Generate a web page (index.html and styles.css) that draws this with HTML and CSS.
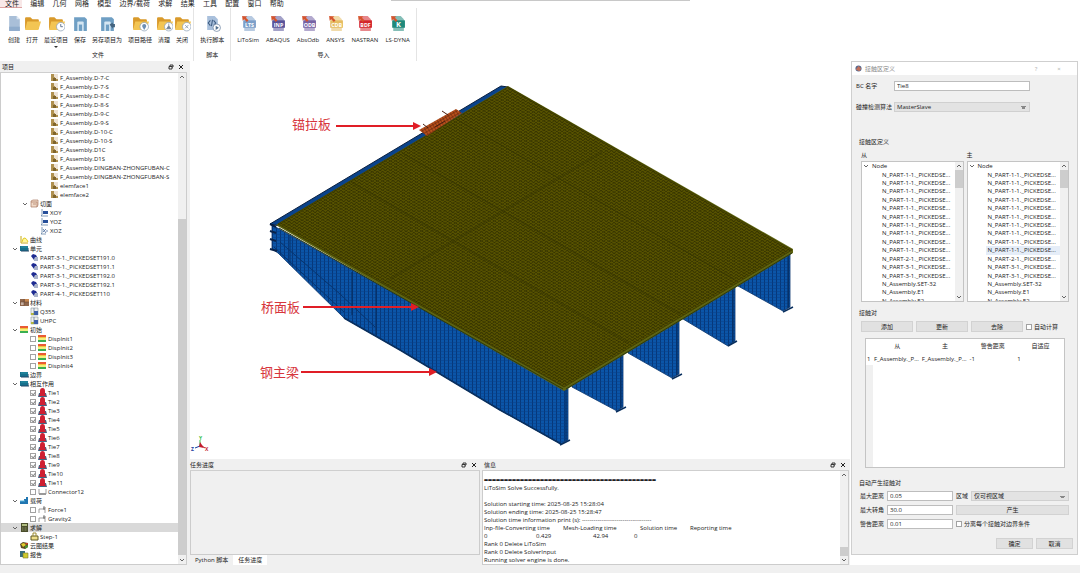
FILE: index.html
```html
<!DOCTYPE html>
<html lang="zh-CN">
<head>
<meta charset="utf-8">
<title>LiToSim</title>
<link rel="stylesheet" href="styles.css">
</head>
<body>
<svg class="defs" aria-hidden="true">
  <symbol id="doc" viewBox="0 0 16 16"><path d="M3 1h7l3 3v11H3z" fill="#a9bfd8"/><path d="M10 1v3h3" fill="#dce7f3"/><path d="M3 11h10v4H3z" fill="#8faccc"/></symbol>
  <symbol id="folder" viewBox="0 0 16 16"><path d="M1 3q0-1 1-1h4l2 2h5q1 0 1 1v8H1z" fill="#d99a2b"/><path d="M3 6h13l-2.500 8H1z" fill="#f3c553"/></symbol>
  <symbol id="recent" viewBox="0 0 16 16"><use href="#folder"/><circle cx="12" cy="11" r="4" fill="#fff" stroke="#8da0b8" stroke-width=".7"/><path d="M12 8.500V11h2" fill="none" stroke="#5f7390" stroke-width=".9"/></symbol>
  <symbol id="save" viewBox="0 0 16 16"><path d="M2 2h10l2 2v11H2z" fill="#6f9fc4"/><path d="M5 15V7q0-1 1-1h4q1 0 1 1v8z" fill="#d5e6f2"/><path d="M6.500 15V9h3v6z" fill="#6f9fc4"/></symbol>
  <symbol id="saveas" viewBox="0 0 16 16"><use href="#save"/><path d="M10 9l3-2v1.500h2v3h-2V13z" fill="#44647f"/></symbol>
  <symbol id="path" viewBox="0 0 16 16"><use href="#folder"/><circle cx="11.500" cy="11" r="4" fill="#fff" stroke="#8da0b8" stroke-width=".7"/><path d="M11.500 14l-1.800-3a1.900 1.900 0 1 1 3.600 0z" fill="#6d8fb5"/></symbol>
  <symbol id="clean" viewBox="0 0 16 16"><use href="#folder"/><circle cx="12" cy="11" r="4" fill="#fff" stroke="#8da0b8" stroke-width=".7"/><path d="M12 8v2l2 3h-4l2-3" fill="#6d7f95" stroke="#6d7f95" stroke-width=".7"/></symbol>
  <symbol id="closef" viewBox="0 0 16 16"><use href="#folder"/><circle cx="12" cy="11" r="4" fill="#fff" stroke="#8da0b8" stroke-width=".7"/><path d="M10.500 9.500l3 3m0-3l-3 3" stroke="#8797aa" stroke-width=".8"/></symbol>
  <symbol id="run" viewBox="0 0 16 16"><path d="M3 1h7l3 3v10H3z" fill="#a9c0dc"/><path d="M6 5L4 7.500 6 10m3-5l2 2.500L9 10M8 4.500l-1 6" fill="none" stroke="#3c5c82"/><circle cx="12" cy="12" r="3.500" fill="#fff" stroke="#6f86a3" stroke-width=".7"/><path d="M11 10l3 2-3 2z" fill="#52708f"/></symbol>
  <symbol id="badge" viewBox="0 0 16 16"><path d="M4 1h7l3 3v11H4z" fill="currentColor" opacity=".55"/><path d="M3 5h12v7H3z" fill="currentColor"/><path d="M2 1l5 .5-1.500 1L8 5 6.500 6.500 4 4 2.500 5.500z" fill="#d5532c"/></symbol>
  <symbol id="face" viewBox="0 0 9 9"><path d="M1 1h4v3h3v4H1z" fill="#b0914f"/><path d="M4 1h4v5H5V4H4z" fill="#ede2d4"/><path d="M3 5h3v3H3z" fill="#80652c"/></symbol>
  <symbol id="cut" viewBox="0 0 9 9"><path d="M1 2l2-1h5v5L7 8H1z" fill="#f0d9c7" stroke="#a97862" stroke-width=".7"/><path d="M1 3h6v5M3 5h3" fill="none" stroke="#a97862" stroke-width=".7"/></symbol>
  <symbol id="plane" viewBox="0 0 9 9"><path d="M2 1v6L1 8h7" fill="none" stroke="#6383a6" stroke-width=".8"/><path d="M3 3h5v3H3z" fill="#27509a"/></symbol>
  <symbol id="plane2" viewBox="0 0 9 9"><path d="M2 1v6L1 8h5" fill="none" stroke="#6383a6" stroke-width=".8"/><path d="M3 3l3 4M6 3L3 6M6 5h2" stroke="#4a6b9c" stroke-width=".8"/></symbol>
  <symbol id="curve" viewBox="0 0 9 9"><path d="M1 1v7h7" fill="none" stroke="#c8aa10"/><path d="M2 7q1-5 3-4t3 4" fill="#fff79a" stroke="#dfca28"/></symbol>
  <symbol id="block" viewBox="0 0 9 9"><path d="M0 2h8v5H0z" fill="#16718d"/><path d="M1 7h8V4" fill="none" stroke="#234767"/><path d="M1 3h7" stroke="#2b95a8"/></symbol>
  <symbol id="elem" viewBox="0 0 9 9"><path d="M1 3l2-2 3 1 1 2-3 3z" fill="#1e2b91"/><path d="M5 4h3v4H4V6z" fill="#aab3c9"/></symbol>
  <symbol id="mat" viewBox="0 0 9 9"><path d="M0 1h9v7H0z" fill="#8f664b"/><path d="M5 1h4v3H5z" fill="#c88850"/><path d="M1 4h3v3H1z" fill="#c6aea0"/><path d="M4 1v7M0 4h9" stroke="#6b4938" stroke-width=".6"/></symbol>
  <symbol id="mat2" viewBox="0 0 9 9"><path d="M1 1h7v7H1z" fill="#eef0ed" stroke="#8694a0" stroke-width=".6"/><path d="M4 4h4v4H4z" fill="#3d5fa9"/><path d="M1 6h3v2H1z" fill="#b5b83c"/><path d="M4 1v7" stroke="#586e95" stroke-width=".7"/></symbol>
  <symbol id="init" viewBox="0 0 9 9"><path d="M0 1h8v2H0z" fill="#e95b35"/><path d="M0 3h8v1H0z" fill="#f4c43c"/><path d="M0 4h8v2H0z" fill="#f1ef7f"/><path d="M0 6h8v2H0z" fill="#39af51"/></symbol>
  <symbol id="tie" viewBox="0 0 9 9"><path d="M0 9l1-4h7l1 4z" fill="#416684"/><path d="M2 6V3q0-3 2.500-3T7 3v3l1 2H1z" fill="#cf1f31"/></symbol>
  <symbol id="conn" viewBox="0 0 9 9"><path d="M1 2v5h7V2" fill="none" stroke="#888" stroke-width=".8"/><path d="M1 6h7v2H1z" fill="#999"/></symbol>
  <symbol id="load" viewBox="0 0 9 9"><path d="M0 5h4V3h2V1h2v7H0z" fill="#2176b1"/><path d="M0 5h5" stroke="#52b0d9"/></symbol>
  <symbol id="force" viewBox="0 0 9 9"><path d="M1 8V4h6v4" fill="none" stroke="#777" stroke-width=".7"/><path d="M6 1v4M5 3h3" stroke="#555" stroke-width=".7"/></symbol>
  <symbol id="solve" viewBox="0 0 9 9"><path d="M1 0h7v9H1z" fill="#4a4d2b"/><path d="M2 1h5v2H2z" fill="#b0bd80"/><path d="M2 5h5M2 7h5" stroke="#8b9268" stroke-dasharray="1 .5"/></symbol>
  <symbol id="step" viewBox="0 0 9 9"><path d="M1 4h7v4H1z" fill="#efdf8c" stroke="#615a24"/><path d="M3 4V1h3v3" fill="none" stroke="#9c8b31"/></symbol>
  <symbol id="cloud" viewBox="0 0 9 9"><path d="M0 3l3-2 5 1v4L5 8 1 7z" fill="#5b4a25"/><path d="M1 3l3-1 2 2-3 2z" fill="#e3cf2c"/><path d="M5 5l3-1v2L5 8z" fill="#4b9335"/><path d="M5 2l3 0-1 2z" fill="#d14223"/></symbol>
  <symbol id="report" viewBox="0 0 9 9"><path d="M0 1h5v6H0z" fill="#386e7d"/><path d="M3 3h5v5H3z" fill="#d0ca2e" stroke="#777c33" stroke-width=".6"/></symbol>
  <symbol id="down" viewBox="0 0 6 6"><path d="M1 2l2 2 2-2" fill="none" stroke="#555" stroke-width=".9"/></symbol>
  <symbol id="up" viewBox="0 0 6 6"><path d="M1 4l2-2 2 2" fill="none" stroke="#555" stroke-width=".9"/></symbol>
  <symbol id="restore" viewBox="0 0 6 6"><path d="M2 2V1h3v2H4M1 2.500h3V5H1z" fill="none" stroke="#222" stroke-width=".9"/></symbol>
  <symbol id="x" viewBox="0 0 6 6"><path d="M1 1l4 4m0-4L1 5" stroke="#222" stroke-width="1"/></symbol>
</svg>

<header class="top">
  <nav class="menu">
    <button class="active">文件</button><button>编辑</button><button>几何</button><button>网格</button><button>模型</button><button>边界/载荷</button><button>求解</button><button>结果</button><button>工具</button><button>配置</button><button>窗口</button><button>帮助</button>
  </nav>
  <div class="ribbon">
    <section class="group files">
      <div class="tools">
        <button><svg><use href="#doc"/></svg>创建</button>
        <button><svg><use href="#folder"/></svg>打开</button>
        <button class="drop"><svg><use href="#recent"/></svg>最近项目</button>
        <button><svg><use href="#save"/></svg>保存</button>
        <button><svg><use href="#saveas"/></svg>另存项目为</button>
        <button><svg><use href="#path"/></svg>项目路径</button>
        <button><svg><use href="#clean"/></svg>清理</button>
        <button><svg><use href="#closef"/></svg>关闭</button>
      </div>
      <h2>文件</h2>
    </section>
    <section class="group">
      <div class="tools"><button><svg><use href="#run"/></svg>执行脚本</button></div>
      <h2>脚本</h2>
    </section>
    <section class="group imports">
      <div class="tools">
        <button><svg class="c-lts" viewBox="0 0 16 16"><use href="#badge"/><text x="9" y="11">LTS</text></svg>LiToSim</button>
        <button><svg class="c-inp" viewBox="0 0 16 16"><use href="#badge"/><text x="9" y="11">INP</text></svg>ABAQUS</button>
        <button><svg class="c-odb" viewBox="0 0 16 16"><use href="#badge"/><text x="9" y="11">ODB</text></svg>AbsOdb</button>
        <button><svg class="c-cdb" viewBox="0 0 16 16"><use href="#badge"/><text x="9" y="11">CDB</text></svg>ANSYS</button>
        <button><svg class="c-bdf" viewBox="0 0 16 16"><use href="#badge"/><text x="9" y="11">BDF</text></svg>NASTRAN</button>
        <button><svg class="c-k" viewBox="0 0 16 16"><use href="#badge"/><text class="big" x="9" y="11">K</text></svg>LS-DYNA</button>
      </div>
      <h2>导入</h2>
    </section>
  </div>
</header>

<main class="work">
  <aside class="project">
    <div class="bar"><h2>项目</h2><button aria-label="浮动"><svg><use href="#restore"/></svg></button><button aria-label="关闭"><svg><use href="#x"/></svg></button></div>
    <div class="scroller">
      <ul class="tree">
        <li class="l3"><svg><use href="#face"/></svg>F_Assembly.D-7-C</li>
        <li class="l3"><svg><use href="#face"/></svg>F_Assembly.D-7-S</li>
        <li class="l3"><svg><use href="#face"/></svg>F_Assembly.D-8-C</li>
        <li class="l3"><svg><use href="#face"/></svg>F_Assembly.D-8-S</li>
        <li class="l3"><svg><use href="#face"/></svg>F_Assembly.D-9-C</li>
        <li class="l3"><svg><use href="#face"/></svg>F_Assembly.D-9-S</li>
        <li class="l3"><svg><use href="#face"/></svg>F_Assembly.D-10-C</li>
        <li class="l3"><svg><use href="#face"/></svg>F_Assembly.D-10-S</li>
        <li class="l3"><svg><use href="#face"/></svg>F_Assembly.D1C</li>
        <li class="l3"><svg><use href="#face"/></svg>F_Assembly.D1S</li>
        <li class="l3"><svg><use href="#face"/></svg>F_Assembly.DINGBAN-ZHONGFUBAN-C</li>
        <li class="l3"><svg><use href="#face"/></svg>F_Assembly.DINGBAN-ZHONGFUBAN-S</li>
        <li class="l3"><svg><use href="#face"/></svg>elemface1</li>
        <li class="l3"><svg><use href="#face"/></svg>elemface2</li>
        <li class="l1 open"><svg class="chev"><use href="#down"/></svg><svg><use href="#cut"/></svg>切面</li>
        <li class="l2"><svg><use href="#plane"/></svg>XOY</li>
        <li class="l2"><svg><use href="#plane"/></svg>YOZ</li>
        <li class="l2"><svg><use href="#plane2"/></svg>XOZ</li>
        <li class="l0"><svg><use href="#curve"/></svg>曲线</li>
        <li class="l0 open"><svg class="chev"><use href="#down"/></svg><svg><use href="#block"/></svg>单元</li>
        <li class="l1"><svg><use href="#elem"/></svg>PART-3-1._PICKEDSET191.0</li>
        <li class="l1"><svg><use href="#elem"/></svg>PART-3-1._PICKEDSET191.1</li>
        <li class="l1"><svg><use href="#elem"/></svg>PART-3-1._PICKEDSET192.0</li>
        <li class="l1"><svg><use href="#elem"/></svg>PART-3-1._PICKEDSET192.1</li>
        <li class="l1"><svg><use href="#elem"/></svg>PART-4-1._PICKEDSET110</li>
        <li class="l0 open"><svg class="chev"><use href="#down"/></svg><svg><use href="#mat"/></svg>材料</li>
        <li class="l1"><svg><use href="#mat2"/></svg>Q355</li>
        <li class="l1"><svg><use href="#mat2"/></svg>UHPC</li>
        <li class="l0 open"><svg class="chev"><use href="#down"/></svg><svg><use href="#init"/></svg>初始</li>
        <li class="l1"><label><input type="checkbox"><svg><use href="#init"/></svg>DispInit1</label></li>
        <li class="l1"><label><input type="checkbox"><svg><use href="#init"/></svg>DispInit2</label></li>
        <li class="l1"><label><input type="checkbox"><svg><use href="#init"/></svg>DispInit3</label></li>
        <li class="l1"><label><input type="checkbox"><svg><use href="#init"/></svg>DispInit4</label></li>
        <li class="l0"><svg><use href="#block"/></svg>边界</li>
        <li class="l0 open"><svg class="chev"><use href="#down"/></svg><svg><use href="#block"/></svg>相互作用</li>
        <li class="l1"><label><input type="checkbox" checked><svg><use href="#tie"/></svg>Tie1</label></li>
        <li class="l1"><label><input type="checkbox" checked><svg><use href="#tie"/></svg>Tie2</label></li>
        <li class="l1"><label><input type="checkbox" checked><svg><use href="#tie"/></svg>Tie3</label></li>
        <li class="l1"><label><input type="checkbox" checked><svg><use href="#tie"/></svg>Tie4</label></li>
        <li class="l1"><label><input type="checkbox" checked><svg><use href="#tie"/></svg>Tie5</label></li>
        <li class="l1"><label><input type="checkbox" checked><svg><use href="#tie"/></svg>Tie6</label></li>
        <li class="l1"><label><input type="checkbox" checked><svg><use href="#tie"/></svg>Tie7</label></li>
        <li class="l1"><label><input type="checkbox" checked><svg><use href="#tie"/></svg>Tie8</label></li>
        <li class="l1"><label><input type="checkbox" checked><svg><use href="#tie"/></svg>Tie9</label></li>
        <li class="l1"><label><input type="checkbox" checked><svg><use href="#tie"/></svg>Tie10</label></li>
        <li class="l1"><label><input type="checkbox" checked><svg><use href="#tie"/></svg>Tie11</label></li>
        <li class="l1"><label><input type="checkbox"><svg><use href="#conn"/></svg>Connector12</label></li>
        <li class="l0 open"><svg class="chev"><use href="#down"/></svg><svg><use href="#load"/></svg>载荷</li>
        <li class="l1"><label><input type="checkbox"><svg><use href="#force"/></svg>Force1</label></li>
        <li class="l1"><label><input type="checkbox"><svg><use href="#force"/></svg>Gravity2</label></li>
        <li class="l0 open selected"><svg class="chev"><use href="#down"/></svg><svg><use href="#solve"/></svg>求解</li>
        <li class="l1"><svg><use href="#step"/></svg>Step-1</li>
        <li class="l0"><svg><use href="#cloud"/></svg>云图结果</li>
        <li class="l0"><svg><use href="#report"/></svg>报告</li>
      </ul>
      <div class="sb sb-tree"><svg><use href="#up"/></svg><i></i><svg><use href="#down"/></svg></div>
    </div>
  </aside>

  <section class="center">
    <div class="view">
      <svg viewBox="190 61 660 398" role="img" aria-label="桥梁有限元模型">
        <defs>
          <pattern id="mesh" width="1" height="1" patternUnits="userSpaceOnUse" patternTransform="matrix(2.600 1.500 2.600 -1.560 278 225)"><rect width="1" height="1" fill="#575200"/><path d="M0 0H1M0 0V1" stroke="#2e2d00" stroke-width=".34"/></pattern>
          <pattern id="ribs" width="4" height="3" patternUnits="userSpaceOnUse"><rect width="4" height="3" fill="#0b55a8"/><path d="M.5 0v3" stroke="#06387a"/><path d="M0 .5h4" stroke="#083f86" stroke-width=".5"/></pattern>
          <pattern id="omesh" width="3" height="3" patternUnits="userSpaceOnUse" patternTransform="rotate(-30)"><rect width="3" height="3" fill="#b9501c"/><path d="M0 0h3M0 0v3" stroke="#5c2209"/></pattern>
        </defs>
        <g fill="url(#ribs)" stroke="#07336c" stroke-width=".8">
          <path d="M738 286L790 253V307L783 311 738 286z"/>
          <path d="M683 318L735 287V341L728 346 683 319z"/>
          <path d="M628 352L679 320V374L672 378 628 353z"/>
          <path d="M572 386L623 353V407L617 411 572 387z"/>
          <path d="M272 225L562 387 568 386V440L561 444 500 410 400 350 344 318 278 253 272 249z"/>
        </g>
        <path d="M783 312l10-5M728 346l9-5M672 379l10-5M616 412l10-5M560 445l10-5M561 444L500 410 400 350 344 318" fill="none" stroke="#092f5e" stroke-width="1.500"/>
        <path d="M788 254v54M733 289v53M677 322v53M621 355v53M566 388v53M376 285v50M352 272v43" stroke="#062b5b"/>
        <path d="M280 242l60 52 35 33M274 247l70 65M290 235v30" fill="none" stroke="#07356f"/>
        <path d="M270 224l6 3M270 231l6 2M270 239l6 2M270 249l7 2" stroke="#08224a" stroke-width="2"/>
        <path d="M270 224L501 86l7 1L280 226z" fill="#0a438b" stroke="#0a1f3e"/>
        <path d="M276 225L508 86 793 249v4L564 391z" fill="#5f6411"/>
        <path d="M278 224L508 87 792 250 564 387z" fill="url(#mesh)" stroke="#414000"/>
        <path d="M402 153L680 314M351 182L629 343M456 119l278 160M390 279l212-127" stroke="#353500" stroke-width=".8" opacity=".7"/>
        <path d="M279 228L563 389M566 389L792 253" fill="none" stroke="#2b3911"/>
        <path d="M419 130L456 109l6 4-35 23z" fill="url(#omesh)"/>
        <path d="M435 127l10-6M442 111l6 4M423 124l5 4" stroke="#4c1f10"/>
        <g stroke="#e01e26" stroke-width="2"><path d="M336 126h80M303 307h110M301 372h130"/></g>
        <path d="M413 122l8 4-8 4zM411 303l8 4-8 4zM429 368l8 4-8 4z" fill="#e01e26"/>
        <g class="note"><text x="292" y="129">锚拉板</text><text x="261" y="312">桥面板</text><text x="260" y="377">钢主梁</text></g>
        <path d="M200 446v-6" stroke="#3ac04a"/><path d="M200 446l-5 2" stroke="#183a9c"/><path d="M200 442l4 6-5-1z" fill="#c21b2d"/><path d="M202 446l3 2" stroke="#c21b2d"/>
        <g class="axis"><text x="199" y="440" fill="#3ac04a">Y</text><text x="191" y="451" fill="#183a9c">Z</text><text x="205" y="451" fill="#c21b2d">X</text></g>
      </svg>
    </div>
    <div class="docks">
      <section class="dock task">
        <div class="bar"><h2>任务进度</h2><button aria-label="浮动"><svg><use href="#restore"/></svg></button><button aria-label="关闭"><svg><use href="#x"/></svg></button></div>
        <div class="empty"></div>
        <div class="tabs"><button>Python 脚本</button><button class="on">任务进度</button></div>
      </section>
      <section class="dock info">
        <div class="bar"><h2>信息</h2><button aria-label="浮动"><svg><use href="#restore"/></svg></button><button aria-label="关闭"><svg><use href="#x"/></svg></button></div>
        <div class="log">
          <div class="lines">
            <p class="rule">===========================================</p>
            <p>LiToSim Solve Successfully.</p>
            <p>&nbsp;</p>
            <p>Solution starting time: 2025-08-25 15:28:04</p>
            <p>Solution ending time: 2025-08-25 15:28:47</p>
            <p>Solution time information print (s): ------------------------------------</p>
            <p class="cols"><span>Inp-file-Converting time</span><span>Mesh-Loading time</span><span>Solution time</span><span>Reporting time</span></p>
            <p class="vals"><span>0</span><span>0.429</span><span>42.94</span><span>0</span></p>
            <p>Rank 0 Delete LiToSim</p>
            <p>Rank 0 Delete SolverInput</p>
            <p>Running solver engine is done.</p>
          </div>
          <div class="sb sb-log"><svg><use href="#up"/></svg><i></i><svg><use href="#down"/></svg></div>
        </div>
      </section>
    </div>
  </section>

  <aside class="side">
    <form class="dialog">
      <div class="title"><svg viewBox="0 0 8 8"><circle cx="4" cy="4" r="3.500" fill="#596a8e"/><path d="M1 5l3-4 3 3-2 3z" fill="#c2705b"/></svg><h2>接触区定义</h2><button type="button">?</button><button type="button">×</button></div>
      <div class="fields">
        <label for="bc">BC 名字</label><input id="bc" type="text" value="Tie8">
        <label for="alg">碰撞检测算法</label><select id="alg"><option>MasterSlave</option></select>
      </div>
      <h3>接触区定义</h3>
      <div class="lists">
        <div><h4>从</h4>
          <div class="list">
            <ul><li class="node"><svg class="chev"><use href="#down"/></svg>Node</li><li>N_PART-1-1._PICKEDSE...</li><li>N_PART-1-1._PICKEDSE...</li><li>N_PART-1-1._PICKEDSE...</li><li>N_PART-1-1._PICKEDSE...</li><li>N_PART-1-1._PICKEDSE...</li><li>N_PART-1-1._PICKEDSE...</li><li>N_PART-1-1._PICKEDSE...</li><li>N_PART-1-1._PICKEDSE...</li><li>N_PART-1-1._PICKEDSE...</li><li>N_PART-1-1._PICKEDSE...</li><li>N_PART-2-1._PICKEDSE...</li><li>N_PART-3-1._PICKEDSE...</li><li>N_PART-3-1._PICKEDSE...</li><li>N_Assembly.SET-32</li><li>N_Assembly.E1</li><li>N_Assembly.E2</li></ul>
            <div class="sb sb-list"><svg><use href="#up"/></svg><i></i><svg><use href="#down"/></svg></div>
          </div>
        </div>
        <div><h4>主</h4>
          <div class="list">
            <ul><li class="node"><svg class="chev"><use href="#down"/></svg>Node</li><li>N_PART-1-1._PICKEDSE...</li><li>N_PART-1-1._PICKEDSE...</li><li>N_PART-1-1._PICKEDSE...</li><li>N_PART-1-1._PICKEDSE...</li><li>N_PART-1-1._PICKEDSE...</li><li>N_PART-1-1._PICKEDSE...</li><li>N_PART-1-1._PICKEDSE...</li><li>N_PART-1-1._PICKEDSE...</li><li>N_PART-1-1._PICKEDSE...</li><li class="hover">N_PART-1-1._PICKEDSE...</li><li>N_PART-2-1._PICKEDSE...</li><li>N_PART-3-1._PICKEDSE...</li><li>N_PART-3-1._PICKEDSE...</li><li>N_Assembly.SET-32</li><li>N_Assembly.E1</li><li>N_Assembly.E2</li></ul>
            <div class="sb sb-list"><svg><use href="#up"/></svg><i></i><svg><use href="#down"/></svg></div>
          </div>
        </div>
      </div>
      <h3>接触对</h3>
      <div class="actions"><button type="button">添加</button><button type="button">更新</button><button type="button">去除</button><label><input type="checkbox">自动计算</label></div>
      <div class="pairs">
        <table>
          <thead><tr><th></th><th>从</th><th>主</th><th>警告距离</th><th>自适应</th></tr></thead>
          <tbody><tr><td>1</td><td>F_Assembly._P...</td><td>F_Assembly._P...</td><td>-1</td><td>1</td></tr></tbody>
        </table>
        <div class="rest"></div>
      </div>
      <h3>自动产生接触对</h3>
      <div class="auto">
        <label for="dist">最大距离</label><input id="dist" type="text" value="0.05">
        <div class="region"><label for="reg">区域</label><select id="reg"><option>仅可视区域</option></select></div>
        <label for="ang">最大转角</label><input id="ang" type="text" value="30.0">
        <button type="button">产生</button>
        <label for="warn">警告距离</label><input id="warn" type="text" value="0.01">
        <label class="check"><input type="checkbox">分离每个接触对边界条件</label>
      </div>
      <div class="confirm"><button type="button">确定</button><button type="button">取消</button></div>
    </form>
  </aside>
</main>
</body>
</html>
```

FILE: styles.css
```css
* { box-sizing: border-box; }
body {
  margin: 0;
  min-height: 100vh;
  display: flex;
  flex-direction: column;
  background: #f0f0f0;
  color: #222;
  font: 6px/8px "Open Sans", "Noto Sans CJK SC", sans-serif;
}
h2, h3, h4, p, ul { margin: 0; padding: 0; font: inherit; }
ul { list-style: none; }
svg { display: block; flex: none; }
.defs { position: absolute; width: 0; height: 0; }
button, input, select { font: inherit; color: inherit; margin: 0; padding: 0; border: 0; border-radius: 0; background: none; }

input[type="checkbox"] {
  appearance: none;
  flex: none;
  width: 6px;
  height: 6px;
  border: 1px solid #a2a2a2;
  background: #fff;
  display: grid;
  place-items: center;
}
input[type="checkbox"]:checked::after {
  content: "";
  width: 2px;
  height: 3px;
  border: solid #888;
  border-width: 0 1px 1px 0;
  rotate: 40deg;
}

/* menu and ribbon */
.top { background: #fff linear-gradient(#c8c8c8, #c8c8c8) no-repeat 391px 0 / 299px 1px; height: 61px; }
.menu {
  display: flex;
  justify-content: space-between;
  width: 284px;
  height: 8px;
  font-size: 7px;
  line-height: 7px;
}
.menu button { height: 8px; padding: 0 0 1px; }
.menu .active { padding: 0 3px 1px 5px; background: #f8e8e8; border-bottom: 1px solid #dda3a3; }
.ribbon { display: flex; height: 53px; }
.group { display: flex; flex-direction: column; align-items: center; padding: 7px 6px 0; border-right: 1px solid #e4e4e4; }
.files { padding: 7px 5px 0 8px; }
.tools { display: flex; gap: 6px; }
.imports .tools { gap: 7px; }
.tools button { display: flex; flex-direction: column; align-items: center; gap: 4px; height: 36px; white-space: nowrap; }
.tools svg { width: 17px; height: 17px; margin: 0 -3px; }
.tools .drop { position: relative; }
.drop::after { content: ""; position: absolute; bottom: 3px; border: 2px solid transparent; border-top-color: #333; border-bottom: 0; }
.group h2 { line-height: 8px; }
.tools text { font: bold 5px "Open Sans", sans-serif; text-anchor: middle; fill: #fff; }
.tools .big { font-size: 7px; }
.c-lts { color: #7c9fc9; }
.c-inp { color: #58539a; }
.c-odb { color: #7563a5; }
.c-cdb { color: #e6bd62; }
.c-bdf { color: #d3242b; }
.c-k { color: #1f897b; }

/* work area */
.work { display: flex; flex: 1; padding-bottom: 8px; }
.bar { display: flex; align-items: center; height: 12px; padding: 0 3px 0 2px; gap: 4px; background: #f0f0f0; border-bottom: 1px solid #cfcfcf; }
.task .bar { padding-left: 0; }
.bar h2 { flex: 1; }
.bar svg { width: 6px; height: 6px; }
.project { flex: 0 0 187px; display: flex; flex-direction: column; }
.scroller { display: flex; flex: 1; background: #fff; border: solid #ccc; border-width: 0 1px 1px; }
.tree { flex: 1; }
.tree li { display: flex; align-items: center; height: 9px; white-space: nowrap; }
.tree li svg { width: 9px; height: 9px; margin-right: 1px; }
.tree li .chev { width: 6px; height: 6px; margin: 0 2px; }
.tree label { display: flex; align-items: center; }
.tree label input { margin-right: 2px; }
.l0 { padding-left: 19px; }
.l1 { padding-left: 29px; }
.l2 { padding-left: 39px; }
.l3 { padding-left: 49px; }
.l0.open { padding-left: 9px; }
.l1.open { padding-left: 19px; }
.tree .selected { background: #d9d9d9; }
.sb { flex: 0 0 8px; display: flex; flex-direction: column; align-items: center; background: #f0f0f0; }
.sb svg { width: 6px; height: 8px; }
.sb i { width: 100%; background: #cdcdcd; }
.sb-tree svg:last-child { margin-top: 1px; }
.sb-tree i { flex: 1; margin-top: 138px; }
.sb-log i { height: 9px; margin-top: auto; }
.sb-list i { height: 18px; margin-bottom: auto; }

.center { flex: 1; min-width: 0; display: flex; flex-direction: column; padding-left: 3px; }
.view { flex: 1; background: #fff; }
.view svg { width: 100%; height: auto; }
.note text { font: 13px "Noto Sans CJK SC", sans-serif; fill: #d7353c; }
.axis text { font: bold 5px "Open Sans", sans-serif; }
.docks { display: flex; gap: 2px; height: 106px; padding-right: 1px; }
.dock { display: flex; flex-direction: column; min-width: 0; }
.task { flex: 290; }
.info { flex: 367; }
.empty { flex: 1; border: solid #ccc; border-width: 0 1px 1px; }
.tabs { display: flex; height: 10px; }
.tabs button { padding: 0 5px; }
.tabs .on { background: #fff; }
.log { flex: 1; display: flex; background: #fff; border: 1px solid #ccc; border-top: 0; }
.lines { flex: 1; padding: 5px 0 0 1px; }
.lines p { height: 8px; white-space: nowrap; }
.lines .rule { font-weight: 700; font-size: 7px; }
.lines .cols { display: grid; grid-template-columns: 79px 77px 50px 1fr; }
.lines .vals { display: grid; grid-template-columns: 52px 57px 41px 1fr; }

/* contact dialog */
.side { flex: 0 0 230px; background: #fff; padding: 0 2px 10px 1px; }
.dialog { height: 100%; background: #f0f0f0; border: 1px solid #cfcfcf; padding: 0 4px; display: flex; flex-direction: column; }
.title { display: flex; align-items: center; gap: 3px; height: 13px; margin: 0 -4px; padding: 0 8px 0 3px; background: #fff; color: #888; }
.title svg { width: 7px; height: 7px; }
.title h2 { flex: 1; }
.title button { width: 20px; color: #aaa; }
.dialog input[type="text"], .dialog select { width: 100%; height: 10px; border: 1px solid #bdbdbd; padding: 0 2px; line-height: 8px; background: #fff; }
.dialog select {
  appearance: none;
  border-color: #d0d0d0;
  background:
    linear-gradient(#888, #888) no-repeat right 3px center / 5px 1px,
    linear-gradient(#888, #888) no-repeat right 4px top 4px / 3px 2px,
    #e3e3e3;
}
.dialog button { white-space: nowrap; }
.fields { display: grid; grid-template-columns: 38px 136px; grid-auto-rows: 11px; row-gap: 10px; align-items: center; padding-top: 5px; white-space: nowrap; }
.dialog h3 { padding-left: 3px; }
.fields + h3 { margin-top: 26px; }
.lists { display: flex; gap: 3px; padding: 5px 4px 0 5px; }
.lists > div { flex: 1; min-width: 0; }
.list { display: flex; height: 141px; margin-top: 2px; overflow: hidden; background: #fff; border: 1px solid #c4c4c4; }
.list ul { flex: 1; min-width: 0; display: grid; grid-template-rows: repeat(17, 1fr); height: 143px; }
.list li { display: flex; align-items: center; padding-left: 20px; white-space: nowrap; }
.list .node { padding-left: 1px; gap: 3px; }
.list .chev { width: 6px; height: 6px; }
.list .hover { background: linear-gradient(90deg, transparent 18px, #e5edf8 18px); }
.lists + h3 { margin-top: 7px; }
.actions { display: grid; grid-template-columns: 52px 52px 52px 1fr; gap: 3px; padding: 4px 0 0 5px; height: 15px; }
.actions button, .auto button, .confirm button { background: #e1e1e1; border: 1px solid #d2d2d2; line-height: 8px; }
.actions label, .check { display: flex; align-items: center; gap: 2px; white-space: nowrap; }
.pairs { display: flex; flex-direction: column; height: 130px; margin: 6px 8px 0 9px; background: #fff; border: 1px solid #c4c4c4; }
table { width: 100%; table-layout: fixed; border-collapse: collapse; }
th, td { font-weight: 400; padding: 0 0 0 1px; height: 13px; white-space: nowrap; text-align: left; }
th { text-align: center; }
th:first-child { width: 7px; }
.rest { flex: 1; border-left: 7px solid #f0f0f0; }
.pairs + h3 { margin-top: 11px; }
.auto { display: grid; grid-template-columns: 24px 66px 1fr; grid-template-rows: repeat(3, 10px); gap: 4px 3px; padding: 4px 4px 0; align-items: center; white-space: nowrap; }
.auto button { height: 10px; }
.region { display: grid; grid-template-columns: 12px 1fr; gap: 3px; align-items: center; }
.confirm { display: flex; justify-content: flex-end; gap: 3px; margin: auto 0 5px; }
.confirm button { width: 37px; height: 11px; }
```
